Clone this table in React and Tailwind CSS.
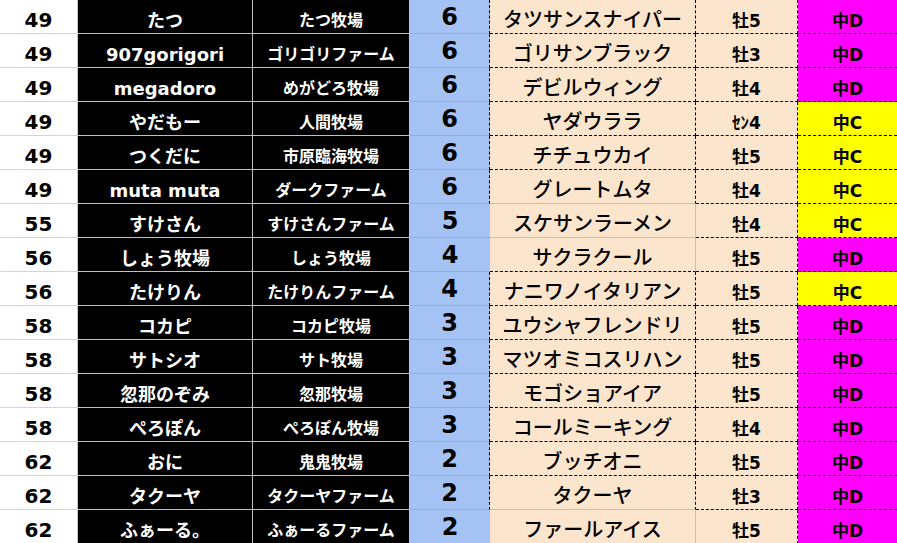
const rows = [
  { rank: "49", name: "たつ", farm: "たつ牧場", num: "6", horse: "タツサンスナイパー", sex: "牡5", grade: "中D" },
  { rank: "49", name: "907gorigori", farm: "ゴリゴリファーム", num: "6", horse: "ゴリサンブラック", sex: "牡3", grade: "中D" },
  { rank: "49", name: "megadoro", farm: "めがどろ牧場", num: "6", horse: "デビルウィング", sex: "牡4", grade: "中D" },
  { rank: "49", name: "やだもー", farm: "人間牧場", num: "6", horse: "ヤダウララ", sex: "ｾﾝ4", grade: "中C" },
  { rank: "49", name: "つくだに", farm: "市原臨海牧場", num: "6", horse: "チチュウカイ", sex: "牡5", grade: "中C" },
  { rank: "49", name: "muta muta", farm: "ダークファーム", num: "6", horse: "グレートムタ", sex: "牡4", grade: "中C", grayBottom: true },
  { rank: "55", name: "すけさん", farm: "すけさんファーム", num: "5", horse: "スケサンラーメン", sex: "牡4", grade: "中C", plain: true, grayBottom: true },
  { rank: "56", name: "しょう牧場", farm: "しょう牧場", num: "4", horse: "サクラクール", sex: "牡5", grade: "中D", plain: true },
  { rank: "56", name: "たけりん", farm: "たけりんファーム", num: "4", horse: "ナニワノイタリアン", sex: "牡5", grade: "中C" },
  { rank: "58", name: "コカピ", farm: "コカピ牧場", num: "3", horse: "ユウシャフレンドリ", sex: "牡5", grade: "中D" },
  { rank: "58", name: "サトシオ", farm: "サト牧場", num: "3", horse: "マツオミコスリハン", sex: "牡5", grade: "中D" },
  { rank: "58", name: "忽那のぞみ", farm: "忽那牧場", num: "3", horse: "モゴショアイア", sex: "牡5", grade: "中D" },
  { rank: "58", name: "ぺろぽん", farm: "ぺろぽん牧場", num: "3", horse: "コールミーキング", sex: "牡4", grade: "中D" },
  { rank: "62", name: "おに", farm: "鬼鬼牧場", num: "2", horse: "ブッチオニ", sex: "牡5", grade: "中D" },
  { rank: "62", name: "タクーヤ", farm: "タクーヤファーム", num: "2", horse: "タクーヤ", sex: "牡3", grade: "中D", grayBottom: true },
  { rank: "62", name: "ふぁーる。", farm: "ふぁーるファーム", num: "2", horse: "ファールアイス", sex: "牡5", grade: "中D", plain: true, grayBottom: true },
]

const font = { fontFamily: '"DejaVu Sans", "Noto Sans CJK JP", sans-serif' }

function Row({ r }) {
  const cell = "flex items-end justify-center leading-none whitespace-nowrap"

  let horseBorder = "[border-right:1px_dashed_#000] [border-bottom:1px_dashed_#000]"
  if (r.plain && r.grayBottom) horseBorder = "[border-right:1px_solid_#c0c0c0] [border-bottom:1px_solid_#c0c0c0]"
  else if (r.plain) horseBorder = "[border-right:1px_solid_#c0c0c0] [border-bottom:1px_dashed_#000]"
  else if (r.grayBottom) horseBorder = "[border-right:1px_dashed_#000] [border-bottom:1px_solid_#c0c0c0]"

  return (
    <>
      {/* rank */}
      <div className={`${cell} bg-white border-b border-r border-[#c8c8c8] border-b-[#d4d4d4] text-black font-bold text-[20px] pb-[3px]`}>
        {r.rank}
      </div>
      {/* player name */}
      <div className={`${cell} bg-black border-b border-r border-[#c0c0c0] text-white font-bold text-[18px] pb-[3px]`}>
        {r.name}
      </div>
      {/* farm */}
      <div className={`${cell} bg-black border-b border-r border-[#c0c0c0] text-white font-bold text-[16px] pb-[4px]`}>
        {r.farm}
      </div>
      {/* count */}
      <div
        className={`${cell} bg-[#a4c2f4] border-b border-b-[#91acdc] text-black font-bold text-[24px] pb-[4px] ${
          r.plain ? "" : "[border-right:1px_dashed_#000]"
        }`}
      >
        {r.num}
      </div>
      {/* horse */}
      <div className={`${cell} bg-[#fce5cd] text-black font-medium text-[20px] pb-[3px] ${horseBorder}`}>
        {r.horse}
      </div>
      {/* sex / age */}
      <div className={`${cell} bg-[#fce5cd] border-b border-r border-dashed border-black text-black font-bold text-[17px] pb-[3px]`}>
        {r.sex}
      </div>
      {/* grade */}
      <div
        className={`${cell} border-b border-dashed border-black text-black font-bold text-[17px] pb-[3px] ${
          r.grade === "中C" ? "bg-[#ffff00]" : "bg-[#ff00ff]"
        }`}
      >
        {r.grade}
      </div>
    </>
  )
}

export default function App() {
  return (
    <div className="w-[897px] h-[543px] overflow-hidden bg-white" style={font}>
      <div className="grid grid-cols-[78px_175px_157px_80px_206px_102px_99px] auto-rows-[34px]">
        {rows.map((r, i) => (
          <Row key={i} r={r} />
        ))}
      </div>
    </div>
  )
}
